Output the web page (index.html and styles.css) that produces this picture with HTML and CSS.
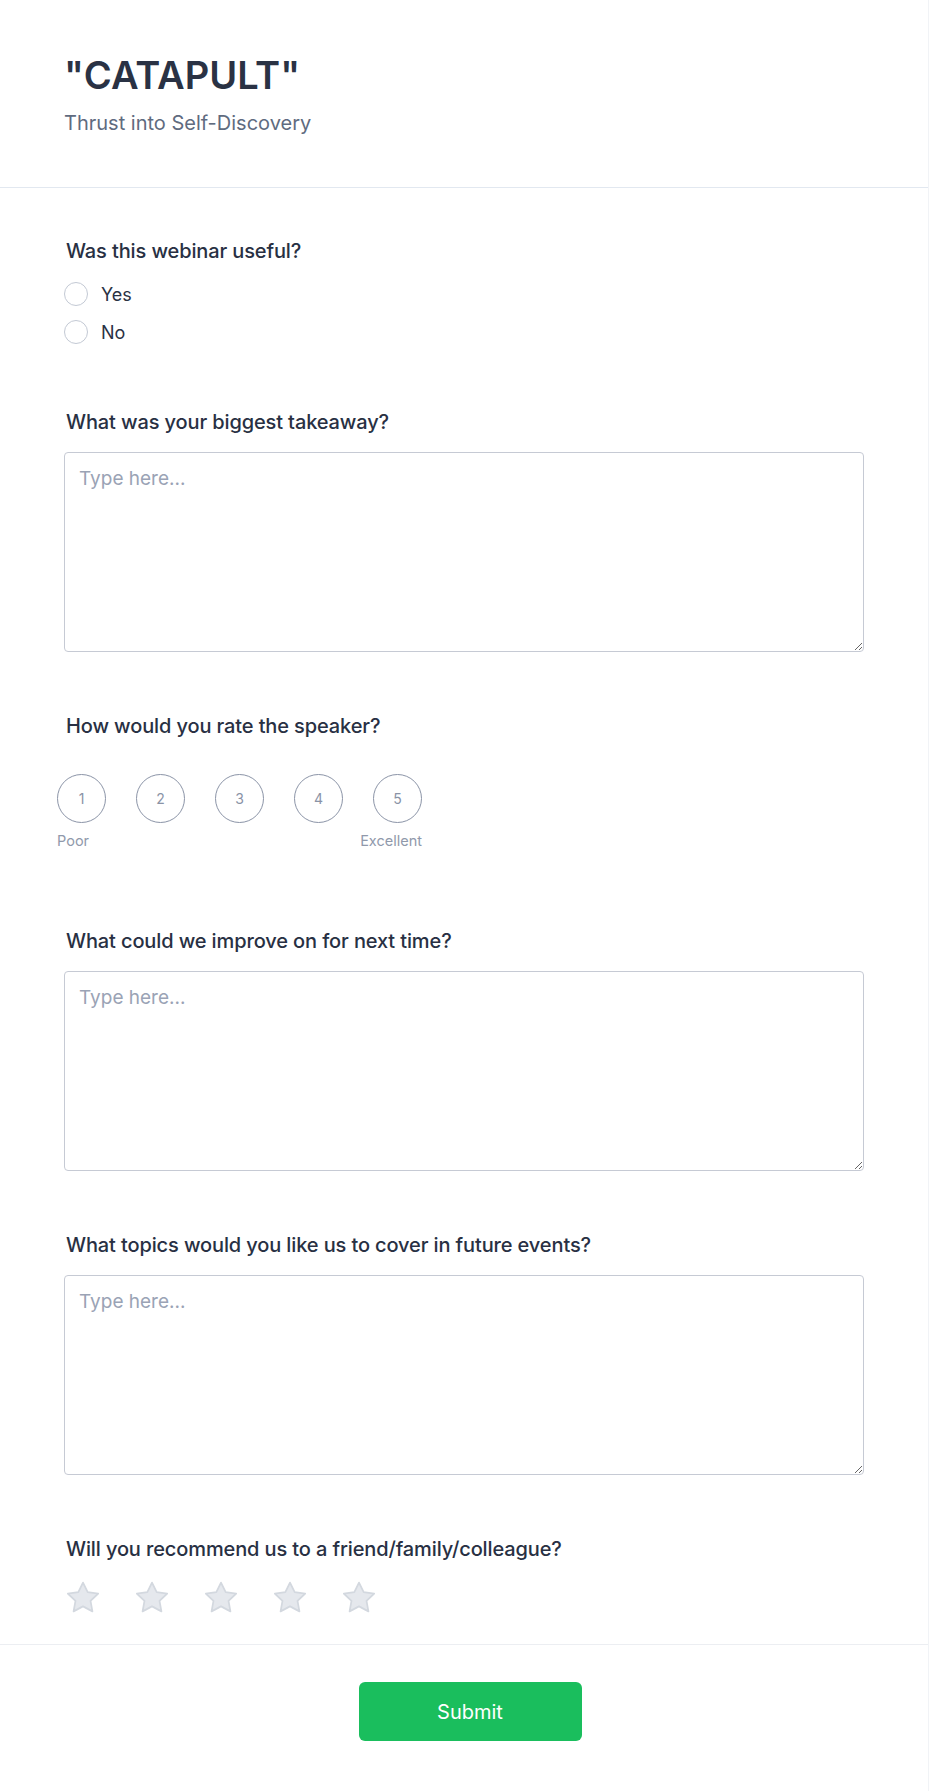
FILE: index.html
```html
<!DOCTYPE html>
<html lang="en">
<head>
<meta charset="utf-8">
<title>"CATAPULT" – Thrust into Self-Discovery</title>
<link rel="stylesheet" href="styles.css">
</head>
<body>
<div class="page">
  <header class="header">
    <h1 class="title">"CATAPULT"</h1>
    <p class="subtitle">Thrust into Self-Discovery</p>
  </header>

  <form class="form">
    <section class="question question-choice">
      <div class="label">Was this webinar useful?</div>
      <div class="options">
        <label class="option"><input type="radio" name="useful" class="radio"><span>Yes</span></label>
        <label class="option"><input type="radio" name="useful" class="radio"><span>No</span></label>
      </div>
    </section>

    <section class="question">
      <div class="label">What was your biggest takeaway?</div>
      <textarea class="textarea" placeholder="Type here..."></textarea>
    </section>

    <section class="question question-rating">
      <div class="label">How would you rate the speaker?</div>
      <div class="rating">
        <div class="scale">
          <button type="button" class="scale-btn">1</button>
          <button type="button" class="scale-btn">2</button>
          <button type="button" class="scale-btn">3</button>
          <button type="button" class="scale-btn">4</button>
          <button type="button" class="scale-btn">5</button>
        </div>
        <div class="scale-labels"><span>Poor</span><span>Excellent</span></div>
      </div>
    </section>

    <section class="question">
      <div class="label">What could we improve on for next time?</div>
      <textarea class="textarea" placeholder="Type here..."></textarea>
    </section>

    <section class="question">
      <div class="label">What topics would you like us to cover in future events?</div>
      <textarea class="textarea" placeholder="Type here..."></textarea>
    </section>

    <section class="question">
      <div class="label">Will you recommend us to a friend/family/colleague?</div>
      <div class="stars">
        <svg class="star" viewBox="0 0 24 24"><path d="M12 2.3l2.95 6.05 6.65.9-4.85 4.6 1.2 6.6L12 17.3l-5.95 3.15 1.2-6.6-4.85-4.6 6.65-.9z"/></svg>
        <svg class="star" viewBox="0 0 24 24"><path d="M12 2.3l2.95 6.05 6.65.9-4.85 4.6 1.2 6.6L12 17.3l-5.95 3.15 1.2-6.6-4.85-4.6 6.65-.9z"/></svg>
        <svg class="star" viewBox="0 0 24 24"><path d="M12 2.3l2.95 6.05 6.65.9-4.85 4.6 1.2 6.6L12 17.3l-5.95 3.15 1.2-6.6-4.85-4.6 6.65-.9z"/></svg>
        <svg class="star" viewBox="0 0 24 24"><path d="M12 2.3l2.95 6.05 6.65.9-4.85 4.6 1.2 6.6L12 17.3l-5.95 3.15 1.2-6.6-4.85-4.6 6.65-.9z"/></svg>
        <svg class="star" viewBox="0 0 24 24"><path d="M12 2.3l2.95 6.05 6.65.9-4.85 4.6 1.2 6.6L12 17.3l-5.95 3.15 1.2-6.6-4.85-4.6 6.65-.9z"/></svg>
      </div>
    </section>
  </form>

  <footer class="footer">
    <button type="button" class="submit">Submit</button>
  </footer>
</div>
</body>
</html>
```

FILE: styles.css
```css
* { box-sizing: border-box; }

html, body {
  margin: 0;
  padding: 0;
  background: #ffffff;
}

body {
  font-family: Inter, "Noto Sans", "Liberation Sans", sans-serif;
  color: #2a3244;
}

.page {
  width: 929px;
  min-height: 1791px;
  border-right: 1px solid #f1f3f6;
}

.header {
  padding: 53px 64px 50px;
  border-bottom: 1px solid #e2e8f0;
}

.title {
  margin: 0;
  font-size: 38px;
  line-height: 44px;
  font-weight: 600;
  color: #2a3244;
}

.subtitle {
  margin: 12px 0 0;
  font-size: 20px;
  line-height: 28px;
  color: #5f6b80;
}

.form {
  padding: 49px 65px 27px 64px;
  display: flex;
  flex-direction: column;
  gap: 60px;
}

.label {
  font-size: 20px;
  line-height: 28px;
  font-weight: 500;
  letter-spacing: -0.12px;
  color: #283043;
  padding-left: 2px;
  margin-bottom: 16px;
}

.question-choice {
  padding-bottom: 2px;
}

.options {
  display: flex;
  flex-direction: column;
  gap: 10px;
  margin-top: -1px;
}

.option {
  display: flex;
  align-items: center;
  gap: 13px;
  height: 28px;
  font-size: 18px;
  color: #2a3244;
}

.radio {
  appearance: none;
  -webkit-appearance: none;
  margin: 0;
  width: 24px;
  height: 24px;
  border: 1.5px solid #c3c9d4;
  border-radius: 50%;
  background: #fff;
}

.textarea {
  display: block;
  width: 800px;
  height: 200px;
  margin: 0;
  padding: 12px 14px;
  border: 1px solid #c6cad4;
  border-radius: 4px;
  font-family: inherit;
  font-size: 19px;
  line-height: 28px;
  color: #2a3244;
  resize: vertical;
  outline: none;
}

.textarea::placeholder {
  color: #9aa3b5;
}

.question-rating {
  padding-bottom: 16px;
}

.rating {
  width: 365px;
  margin-left: -7px;
  margin-top: 34px;
}

.scale {
  display: flex;
  gap: 30px;
}

.scale-btn {
  width: 49px;
  height: 49px;
  padding: 0;
  border: 1.5px solid #8b94a7;
  border-radius: 50%;
  background: #fff;
  font-family: inherit;
  font-size: 14px;
  color: #8a93a6;
}

.scale-labels {
  display: flex;
  justify-content: space-between;
  margin-top: 8px;
  font-size: 14.5px;
  line-height: 20px;
  color: #9099ab;
}

.stars {
  display: flex;
  gap: 31px;
  margin-top: 0;
}

.star {
  width: 38px;
  height: 38px;
  fill: #e5e8ed;
  stroke: #d3d8df;
  stroke-width: 1.1;
  stroke-linejoin: round;
}

.footer {
  border-top: 1px solid #eceef2;
  padding: 37px 0 49px 12px;
  display: flex;
  justify-content: center;
}

.submit {
  width: 223px;
  height: 59px;
  border: none;
  border-radius: 6px;
  background: #1abe5d;
  color: #ffffff;
  font-family: inherit;
  font-size: 20px;
  font-weight: 400;
}
```
